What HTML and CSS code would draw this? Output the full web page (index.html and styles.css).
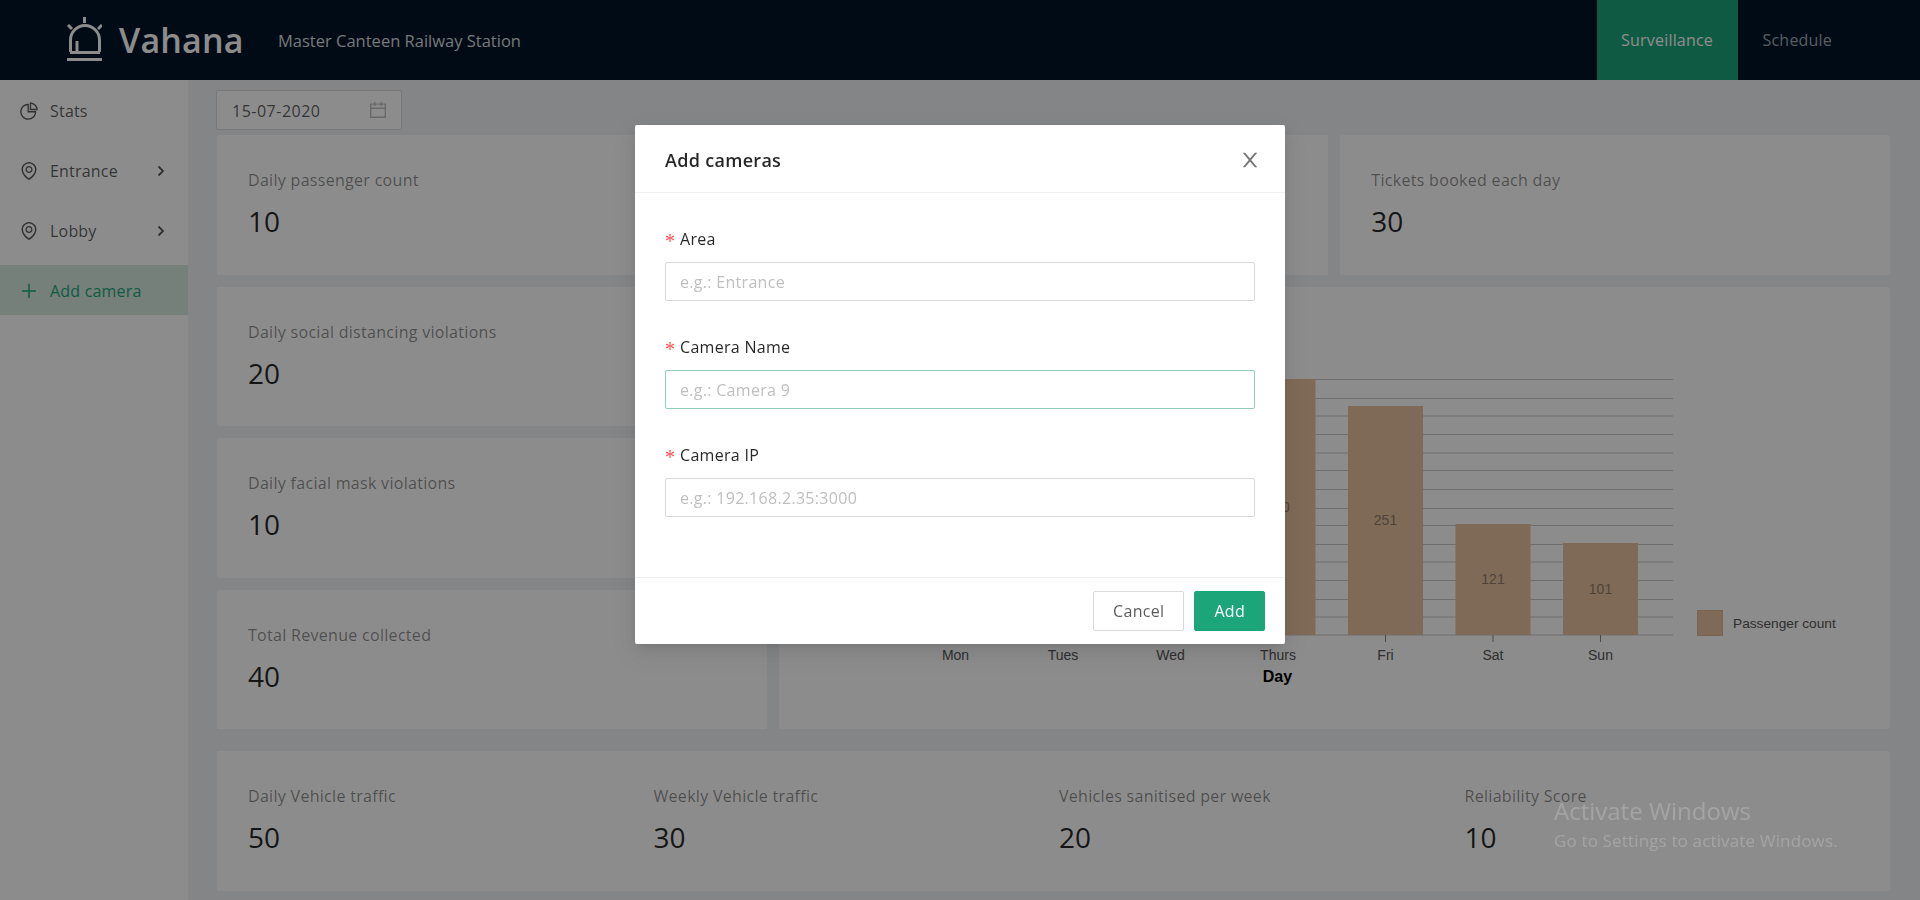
FILE: index.html
```html
<!DOCTYPE html>
<html lang="en">
<head>
    <meta charset="UTF-8">
    <title>Vahana</title>
    <link rel="stylesheet" href="styles.css">
</head>
<body>

<header class="topbar">
    <div class="brand">
        <svg class="brand-icon" width="36" height="46" viewBox="0 0 36 46" fill="none" stroke="currentColor" stroke-width="3">
            <path d="M4.5 36V24a13 13 0 0 1 29 0V36"/>
            <path d="M11 35V25"/>
            <path d="M4 36.5H34"/>
            <path d="M1 43.5H36"/>
            <path d="M18.500 1V7"/>
            <path d="M2 9l4 4"/>
            <path d="M36 9l-4 4"/>
        </svg>
        <span class="brand-name">Vahana</span>
        <span class="brand-place">Master Canteen Railway Station</span>
    </div>
    <nav class="topnav">
        <a class="topnav-item active">Surveillance</a>
        <a class="topnav-item">Schedule</a>
    </nav>
</header>

<div class="layout">
    <aside class="sidebar">
        <div class="side-item">
            <svg class="side-icon" viewBox="64 64 896 896" fill="currentColor"><path d="M864 518H506V160c0-4.400-3.600-8-8-8h-26a398.460 398.460 0 0 0-282.800 117.100 398.190 398.190 0 0 0-85.700 127.100A397.610 397.610 0 0 0 72 552a398.460 398.460 0 0 0 117.100 282.800c36.700 36.700 79.500 65.600 127.100 85.700A397.610 397.610 0 0 0 472 952a398.460 398.460 0 0 0 282.800-117.100c36.700-36.700 65.600-79.500 85.700-127.100A397.610 397.610 0 0 0 872 552v-26c0-4.400-3.600-8-8-8zM705.700 787.800A331.590 331.590 0 0 1 470.400 884c-88.100-.4-170.900-34.900-233.200-97.200C174.500 724.100 140 640.700 140 552c0-88.700 34.500-172.100 97.200-234.800 54.600-54.600 124.900-87.900 200.800-95.500V586h364.300c-7.700 76.300-41.300 147-96.600 201.800zM952 462.400l-2.600-28.200c-8.500-92.100-49.400-179-115.200-244.600A399.400 399.400 0 0 0 589 74.600L560.700 72c-4.700-.4-8.700 3.200-8.700 7.900V464c0 4.400 3.600 8 8 8l384-1c4.700 0 8.400-4 8-8.600zm-332.200-58.200V147.600a332.240 332.240 0 0 1 166.400 89.800c45.700 45.600 77 103.600 90 166.100l-256.400.7z"/></svg>
            <span>Stats</span>
        </div>
        <div class="side-item">
            <svg class="side-icon" viewBox="64 64 896 896" fill="currentColor"><path d="M854.600 289.100a362.490 362.490 0 0 0-79.900-115.700 370.830 370.830 0 0 0-118.200-77.800C610.700 76.600 562.100 67 512 67c-50.100 0-98.700 9.600-144.500 28.500-44.300 18.300-84 44.500-118.200 77.800A363.600 363.600 0 0 0 169.400 289c-19.500 45-29.400 92.800-29.400 142 0 70.600 16.900 140.900 50.100 208.700 26.700 54.500 64 107.600 111 158.100 80.300 86.200 164.500 138.900 188.400 153a43.900 43.900 0 0 0 22.400 6.100c7.800 0 15.500-2 22.400-6.100 23.900-14.100 108.100-66.800 188.400-153 47-50.400 84.300-103.600 111-158.100C867.100 572 884 501.800 884 431.100c0-49.200-9.900-97-29.400-142zM512 880.200c-65.900-41.900-300-207.800-300-449.100 0-77.900 31.100-151.100 87.600-206.300C356.300 169.500 431.700 139 512 139s155.700 30.500 212.400 85.900C780.900 280 812 353.200 812 431.100c0 241.300-234.100 407.200-300 449.100zm0-617.200c-97.200 0-176 78.800-176 176s78.800 176 176 176 176-78.800 176-176-78.800-176-176-176zm79.200 255.200A111.600 111.600 0 0 1 512 551c-29.900 0-58-11.700-79.200-32.800A111.600 111.600 0 0 1 400 439c0-29.900 11.700-58 32.800-79.200C454 338.600 482.100 327 512 327c29.900 0 58 11.600 79.200 32.800C612.400 381 624 409.100 624 439c0 29.900-11.600 58-32.800 79.200z"/></svg>
            <span>Entrance</span>
            <svg class="side-arrow" viewBox="0 0 8 12" fill="none" stroke="currentColor" stroke-width="1.800"><path d="M1.500 1.500L6 6l-4.500 4.500"/></svg>
        </div>
        <div class="side-item">
            <svg class="side-icon" viewBox="64 64 896 896" fill="currentColor"><path d="M854.600 289.100a362.490 362.490 0 0 0-79.900-115.700 370.830 370.830 0 0 0-118.200-77.800C610.700 76.600 562.100 67 512 67c-50.100 0-98.700 9.600-144.500 28.500-44.300 18.300-84 44.500-118.200 77.800A363.600 363.600 0 0 0 169.400 289c-19.500 45-29.400 92.800-29.400 142 0 70.600 16.900 140.900 50.100 208.700 26.700 54.500 64 107.600 111 158.100 80.300 86.200 164.500 138.900 188.400 153a43.900 43.900 0 0 0 22.400 6.100c7.800 0 15.500-2 22.400-6.100 23.900-14.100 108.100-66.800 188.400-153 47-50.400 84.300-103.600 111-158.100C867.100 572 884 501.800 884 431.100c0-49.200-9.900-97-29.400-142zM512 880.200c-65.900-41.900-300-207.800-300-449.100 0-77.900 31.100-151.100 87.600-206.300C356.300 169.500 431.700 139 512 139s155.700 30.500 212.400 85.900C780.900 280 812 353.200 812 431.100c0 241.300-234.100 407.200-300 449.100zm0-617.200c-97.200 0-176 78.800-176 176s78.800 176 176 176 176-78.800 176-176-78.800-176-176-176zm79.200 255.200A111.600 111.600 0 0 1 512 551c-29.900 0-58-11.700-79.200-32.800A111.600 111.600 0 0 1 400 439c0-29.900 11.700-58 32.800-79.200C454 338.600 482.100 327 512 327c29.900 0 58 11.600 79.200 32.800C612.400 381 624 409.100 624 439c0 29.900-11.600 58-32.800 79.200z"/></svg>
            <span>Lobby</span>
            <svg class="side-arrow" viewBox="0 0 8 12" fill="none" stroke="currentColor" stroke-width="1.800"><path d="M1.500 1.500L6 6l-4.500 4.500"/></svg>
        </div>
        <div class="side-item selected">
            <svg class="side-icon" viewBox="64 64 896 896" fill="currentColor"><path d="M482 152h60q8 0 8 8v704q0 8-8 8h-60q-8 0-8-8V160q0-8 8-8z"/><path d="M176 474h672q8 0 8 8v60q0 8-8 8H176q-8 0-8-8v-60q0-8 8-8z"/></svg>
            <span>Add camera</span>
        </div>
    </aside>

    <main class="content">
        <div class="date-picker">
            <span>15-07-2020</span>
            <svg class="date-icon" viewBox="64 64 896 896" fill="currentColor"><path d="M880 184H712v-64c0-4.400-3.600-8-8-8h-56c-4.400 0-8 3.600-8 8v64H384v-64c0-4.400-3.600-8-8-8h-56c-4.400 0-8 3.600-8 8v64H144c-17.700 0-32 14.300-32 32v664c0 17.700 14.300 32 32 32h736c17.700 0 32-14.300 32-32V216c0-17.700-14.300-32-32-32zm-40 656H184V460h656v380zM184 392V256h128v48c0 4.400 3.600 8 8 8h56c4.400 0 8-3.600 8-8v-48h256v48c0 4.400 3.600 8 8 8h56c4.400 0 8-3.600 8-8v-48h128v136H184z"/></svg>
        </div>

        <section class="stats-grid">
            <div class="card stat">
                <div class="stat-label">Daily passenger count</div>
                <div class="stat-value">10</div>
            </div>
            <div class="card stat"></div>
            <div class="card stat">
                <div class="stat-label">Tickets booked each day</div>
                <div class="stat-value">30</div>
            </div>
            <div class="card stat">
                <div class="stat-label">Daily social distancing violations</div>
                <div class="stat-value">20</div>
            </div>
            <div class="card chart-card">
                <svg class="chart" width="1111" height="440" viewBox="0 0 1111 440">
                    <g class="grid">
                        <path d="M123 92.500H894"/>
                        <path d="M123 111.500H894"/>
                        <path d="M123 129H894"/>
                        <path d="M123 147.500H894"/>
                        <path d="M123 166H894"/>
                        <path d="M123 183.500H894"/>
                        <path d="M123 202.500H894"/>
                        <path d="M123 221.500H894"/>
                        <path d="M123 238.500H894"/>
                        <path d="M123 257.500H894"/>
                        <path d="M123 275H894"/>
                        <path d="M123 293.500H894"/>
                        <path d="M123 312.500H894"/>
                        <path d="M123 330H894"/>
                        <path d="M123 348H894"/>
                    </g>
                    <g class="bars">
                        <rect x="461.500" y="92" width="75" height="256"/>
                        <rect x="569" y="119" width="75" height="229"/>
                        <rect x="676.500" y="237" width="75" height="111"/>
                        <rect x="784" y="256" width="75" height="92"/>
                    </g>
                    <g class="bar-values">
                        <text x="499" y="225">280</text>
                        <text x="606.500" y="238">251</text>
                        <text x="714" y="297">121</text>
                        <text x="821.500" y="307">101</text>
                    </g>
                    <g class="ticks">
                        <path d="M606.500 348v7M714 348v7M821.500 348v7"/>
                    </g>
                    <g class="tick-labels">
                        <text x="176.500" y="373">Mon</text>
                        <text x="284" y="373">Tues</text>
                        <text x="391.500" y="373">Wed</text>
                        <text x="499" y="373">Thurs</text>
                        <text x="606.500" y="373">Fri</text>
                        <text x="714" y="373">Sat</text>
                        <text x="821.500" y="373">Sun</text>
                    </g>
                    <text class="axis-title" x="498.500" y="395">Day</text>
                    <rect class="legend-box" x="918.500" y="323.500" width="25" height="25"/>
                    <text class="legend-text" x="954" y="341">Passenger count</text>
                </svg>
            </div>
            <div class="card stat">
                <div class="stat-label">Daily facial mask violations</div>
                <div class="stat-value">10</div>
            </div>
            <div class="card stat">
                <div class="stat-label">Total Revenue collected</div>
                <div class="stat-value">40</div>
            </div>
        </section>

        <section class="card vehicle-row">
            <div class="vehicle-stat">
                <div class="stat-label">Daily Vehicle traffic</div>
                <div class="stat-value">50</div>
            </div>
            <div class="vehicle-stat">
                <div class="stat-label">Weekly Vehicle traffic</div>
                <div class="stat-value">30</div>
            </div>
            <div class="vehicle-stat">
                <div class="stat-label">Vehicles sanitised per week</div>
                <div class="stat-value">20</div>
            </div>
            <div class="vehicle-stat">
                <div class="stat-label">Reliability Score</div>
                <div class="stat-value">10</div>
            </div>
        </section>
    </main>
</div>

<div class="mask"></div>

<div class="modal">
    <div class="modal-header">
        <h2>Add cameras</h2>
        <svg class="modal-close" viewBox="64 64 896 896" fill="currentColor"><path d="M563.800 512l262.500-312.900c4.400-5.200.7-13.100-6.100-13.100h-79.800c-4.700 0-9.200 2.100-12.300 5.700L511.600 449.800 295.100 191.700c-3-3.600-7.500-5.700-12.300-5.700H203c-6.800 0-10.500 7.900-6.100 13.100L459.400 512 196.900 824.900A7.950 7.950 0 0 0 203 838h79.800c4.700 0 9.200-2.100 12.300-5.700l216.500-258.100 216.500 258.100c3 3.600 7.500 5.700 12.300 5.700h79.800c6.800 0 10.500-7.900 6.100-13.100L563.800 512z"/></svg>
    </div>
    <form class="modal-body">
        <label for="area"><span class="req">*</span>Area</label>
        <input type="text" id="area" placeholder="e.g.: Entrance">

        <label for="camName"><span class="req">*</span>Camera Name</label>
        <input type="text" id="camName" class="focused" placeholder="e.g.: Camera 9">

        <label for="camIp"><span class="req">*</span>Camera IP</label>
        <input type="text" id="camIp" placeholder="e.g.: 192.168.2.35:3000">
    </form>
    <div class="modal-footer">
        <button type="button" class="btn">Cancel</button>
        <button type="button" class="btn btn-primary">Add</button>
    </div>
</div>

<div class="activate">
    <div class="activate-title">Activate Windows</div>
    <div class="activate-sub">Go to Settings to activate Windows.</div>
</div>

</body>
</html>
```
FILE: styles.css
```css
* {
    box-sizing: border-box;
}
body {
    margin: 0;
    height: 900px;
    overflow: hidden;
    background-color: #f0f2f5;
    font-family: 'Open Sans', 'Noto Sans', sans-serif;
    font-size: 16px;
    color: rgba(0, 0, 0, 0.65);
}

/* top bar */
.topbar {
    height: 80px;
    background-color: #001529;
    display: flex;
    justify-content: space-between;
}
.brand {
    display: flex;
    align-items: center;
    padding-left: 66px;
    color: #fff;
}
.brand-icon {
    margin-right: 17px;
    margin-top: -2px;
}
.brand-name {
    font-size: 34px;
    font-weight: 600;
    width: 159px;
    letter-spacing: 0.2px;
}
.brand-place {
    font-size: 16.5px;
    color: rgba(255, 255, 255, 0.85);
}
.topnav {
    display: flex;
    padding-right: 63px;
}
.topnav-item {
    display: flex;
    align-items: center;
    padding: 0 25px;
    letter-spacing: 0.2px;
    color: rgba(255, 255, 255, 0.65);
}
.topnav-item.active {
    padding: 0 24.5px;
    background-color: #1da57a;
    color: #fff;
}

/* sidebar */
.layout {
    display: flex;
    height: 820px;
}
.sidebar {
    width: 188px;
    background-color: #fff;
    padding-top: 5px;
    flex-shrink: 0;
}
.side-item {
    height: 50px;
    margin-bottom: 10px;
    display: flex;
    align-items: center;
    padding: 2px 0 0 20px;
    letter-spacing: 0.2px;
}
.side-item.selected {
    background-color: #d5e9de;
    color: #1da57a;
}
.side-icon {
    width: 18px;
    height: 18px;
    margin-right: 12px;
}
.side-arrow {
    width: 8px;
    height: 12px;
    margin-left: auto;
    margin-right: 23px;
}

/* main */
.content {
    flex: 1;
    padding: 10px 30px 0 29px;
}
.date-picker {
    width: 186px;
    height: 40px;
    margin-left: -1px;
    border: 1px solid #d9d9d9;
    border-radius: 2px;
    background-color: #fff;
    display: flex;
    align-items: center;
    justify-content: space-between;
    padding: 2px 14px 0 15px;
    margin-bottom: 5px;
    letter-spacing: 0.5px;
}
.date-icon {
    width: 18px;
    height: 18px;
    margin-top: -2px;
    color: rgba(0, 0, 0, 0.25);
}
.card {
    background-color: #fff;
    border-radius: 2px;
}
.stats-grid {
    display: grid;
    grid-template-columns: repeat(3, 1fr);
    grid-template-rows: repeat(4, 139.5px);
    gap: 12px;
    margin-bottom: 22px;
}
.stat {
    padding: 33px 31px 0;
}
.stat-label {
    line-height: 24px;
    letter-spacing: 0.3px;
    color: rgba(0, 0, 0, 0.45);
}
.stat-value {
    font-size: 28px;
    line-height: 38px;
    margin-top: 10px;
    color: rgba(0, 0, 0, 0.85);
}
.chart-card {
    grid-column: 2 / 4;
    grid-row: 2 / 5;
}
.chart {
    display: block;
}
.grid path {
    stroke: #c8c8c8;
    stroke-width: 1;
}
.bars rect {
    fill: #e7c19e;
}
.bar-values text {
    font-family: 'Liberation Sans', sans-serif;
    font-size: 14px;
    text-anchor: middle;
    fill: #917b69;
}
.ticks path {
    stroke: #888;
}
.tick-labels text {
    font-family: 'Liberation Sans', sans-serif;
    font-size: 14px;
    text-anchor: middle;
    fill: #555;
}
.axis-title {
    font-family: 'Liberation Sans', sans-serif;
    font-size: 16px;
    font-weight: bold;
    text-anchor: middle;
    fill: #000;
}
.legend-box {
    fill: #e7c19e;
    stroke: #e0b995;
}
.legend-text {
    font-family: 'Liberation Sans', sans-serif;
    font-size: 13.7px;
    fill: #555;
}
.vehicle-row {
    height: 140px;
    display: grid;
    grid-template-columns: repeat(4, 1fr);
    padding: 33px 20px 0 31px;
}

/* modal */
.mask {
    position: fixed;
    inset: 0;
    background-color: rgba(0, 0, 0, 0.45);
}
.modal {
    position: fixed;
    left: 635px;
    top: 125px;
    width: 650px;
    height: 519px;
    background-color: #fff;
    border-radius: 2px;
    box-shadow: 0 3px 6px -4px rgba(0, 0, 0, 0.12), 0 6px 16px rgba(0, 0, 0, 0.08), 0 9px 28px 8px rgba(0, 0, 0, 0.05);
    display: flex;
    flex-direction: column;
}
.modal-header {
    height: 68px;
    flex-shrink: 0;
    border-bottom: 1px solid #f0f0f0;
    display: flex;
    align-items: center;
    justify-content: space-between;
    padding: 2px 25px 0 30px;
}
.modal-header h2 {
    margin: 0;
    font-size: 18px;
    font-weight: 600;
    letter-spacing: 0.3px;
    color: rgba(0, 0, 0, 0.85);
}
.modal-close {
    width: 20px;
    height: 20px;
    color: rgba(0, 0, 0, 0.55);
}
.modal-body {
    flex: 1;
    padding: 34px 30px 0;
}
.modal-body label {
    display: block;
    height: 24px;
    line-height: 24px;
    margin-bottom: 11px;
    letter-spacing: 0.3px;
    color: rgba(0, 0, 0, 0.85);
}
.req {
    display: inline-block;
    width: 15px;
    line-height: 0;
    vertical-align: -3px;
    color: #ff4d4f;
    font-family: 'Liberation Serif', serif;
    font-size: 20px;
}
.modal-body input {
    display: block;
    width: 100%;
    height: 39px;
    margin-bottom: 34px;
    padding: 0 14px;
    border: 1px solid #d9d9d9;
    border-radius: 2px;
    font-family: inherit;
    font-size: 16px;
    letter-spacing: 0.3px;
    outline: none;
}
.modal-body input::placeholder {
    color: #bfbfbf;
}
.modal-body input.focused {
    border-color: #8fcdb6;
}
.modal-footer {
    height: 67px;
    flex-shrink: 0;
    border-top: 1px solid #f0f0f0;
    display: flex;
    justify-content: flex-end;
    align-items: flex-start;
    gap: 10px;
    padding: 13px 20px 0;
}
.btn {
    height: 40px;
    padding: 0 19px;
    border: 1px solid #d9d9d9;
    border-radius: 2px;
    background-color: #fff;
    font-family: inherit;
    font-size: 16px;
    letter-spacing: 0.3px;
    color: rgba(0, 0, 0, 0.65);
}
.btn-primary {
    background-color: #1da57a;
    border-color: #1da57a;
    color: #fff;
}

/* windows watermark */
.activate {
    position: fixed;
    left: 1554px;
    top: 795px;
    color: rgba(255, 255, 255, 0.2);
}
.activate-title {
    font-size: 24px;
    line-height: 32px;
}
.activate-sub {
    font-size: 17px;
    line-height: 22px;
    margin-top: 3px;
    letter-spacing: 0.15px;
}
```
